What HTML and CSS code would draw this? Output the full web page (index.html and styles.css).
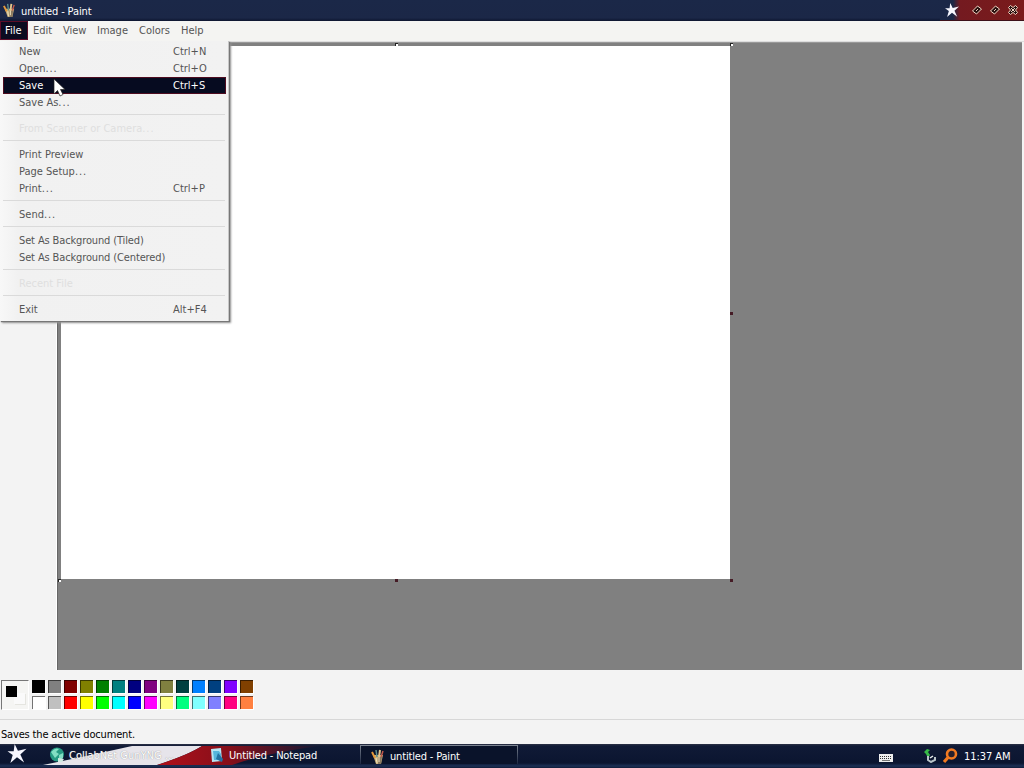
FILE: index.html
```html
<!DOCTYPE html>
<html lang="en">
<head>
    <meta charset="UTF-8">
    <meta name="viewport" content="width=device-width, initial-scale=1.0">
    <title>untitled - Paint</title>
    <link rel="stylesheet" href="styles.css">
</head>
<body>
    <svg width="0" height="0" class="defs">
        <symbol id="paint" viewBox="0 0 16 16">
            <path d="M3 6l10 0-2 9H6z" fill="#c9b27c"/>
            <path d="M8 8h4l-1 7H8z" fill="#8a7a60"/>
            <path d="M5 9L2 3" stroke="#e69a3b" stroke-width="2"/>
            <path d="M7 8L6 1" stroke="#5b8d8b" stroke-width="1.5"/>
            <path d="M9 8l1-7" stroke="#e4c58c" stroke-width="2"/>
            <path d="M11 8l2-6" stroke="#c4584b" stroke-width="1.5"/>
            <path d="M6 9l1 5M9 8v5" stroke="#eee0bd" stroke-width="1"/>
        </symbol>
        <symbol id="star" viewBox="0 0 20 20">
            <path d="M7.5 0l3.500 7 9-2-6.500 6 4 8.500-7.500-5.500L3 20l2.500-8.500L0 7.500l6.500 0z" fill="#f7f7ff"/>
        </symbol>
        <symbol id="diamond" viewBox="0 0 10 10">
            <path d="M.5 6l5-5 4 3-5 5z"/>
            <path d="M4 6l2-2"/>
        </symbol>
    </svg>

    <header class="titlebar">
        <svg class="app-icon"><use href="#paint"/></svg>
        <h1>untitled - Paint</h1>
        <div class="controls">
            <svg class="title-star"><use href="#star"/></svg>
            <svg class="ctl"><use href="#diamond"/></svg>
            <svg class="ctl"><use href="#diamond"/></svg>
            <svg class="ctl" viewBox="0 0 10 10"><path d="M.5 2.5l2-2L5 2.5l2.5-2 2 2L7.5 5l2 2.5-2 2L5 7.5l-2.5 2-2-2L2.5 5zM3 3l4 4M7 3L3 7"/></svg>
        </div>
    </header>

    <nav class="menubar">
        <span class="active t-file">File</span>
        <span class="t-edit">Edit</span>
        <span class="t-view">View</span>
        <span class="t-image">Image</span>
        <span class="t-colors">Colors</span>
        <span class="t-help">Help</span>
        <div class="menu">
            <div class="item"><span>New</span><kbd>Ctrl+N</kbd></div>
            <div class="item"><span>Open<b>...</b></span><kbd>Ctrl+O</kbd></div>
            <div class="item selected"><span>Save</span><kbd>Ctrl+S</kbd></div>
            <div class="item"><span>Save As<b>...</b></span></div>
            <hr>
            <div class="item disabled"><span>From Scanner or Camera<b>...</b></span></div>
            <hr>
            <div class="item"><span>Print Preview</span></div>
            <div class="item"><span>Page Setup<b>...</b></span></div>
            <div class="item"><span>Print<b>...</b></span><kbd>Ctrl+P</kbd></div>
            <hr>
            <div class="item"><span>Send<b>...</b></span></div>
            <hr>
            <div class="item tight"><span>Set As Background (Tiled)</span></div>
            <div class="item tight"><span>Set As Background (Centered)</span></div>
            <hr>
            <div class="item disabled"><span>Recent File</span></div>
            <hr>
            <div class="item"><span>Exit</span><kbd>Alt+F4</kbd></div>
        </div>
    </nav>

    <main class="work">
        <div class="toolbox"></div>
        <div class="area">
            <div class="canvas">
                <i class="handle light nw"></i>
                <i class="handle light n"></i>
                <i class="handle light ne"></i>
                <i class="handle e"></i>
                <i class="handle light sw"></i>
                <i class="handle s"></i>
                <i class="handle se"></i>
            </div>
        </div>
    </main>

    <section class="palette">
        <div class="current"><i class="back"></i><i class="fore"></i></div>
        <div class="swatches" id="swatches"></div>
    </section>

    <footer class="status">Saves the active document.</footer>

    <div class="taskbar">
        <svg class="flag" viewBox="0 0 330 24">
            <defs>
                <linearGradient id="red" x1="0" x2="1">
                    <stop offset="0" stop-color="#b0101a"/>
                    <stop offset=".45" stop-color="#850f1a"/>
                    <stop offset="1" stop-color="#131a35"/>
                </linearGradient>
            </defs>
            <path d="M43 21Q92 11 132 2H202Q188 11 157 21z" fill="#e6e4ea"/>
            <path d="M157 21Q188 11 202 2H320Q270 8 232 21z" fill="url(#red)"/>
        </svg>
        <svg class="start"><use href="#star"/></svg>
        <div class="task collab">
            <svg viewBox="0 0 16 16">
                <circle cx="8" cy="7.5" r="7" fill="#279b83"/>
                <path d="M2 5q4-5 8-3l-3 3 3 2-4 4-2-3zM10 8l4-2v5l-4 3z" fill="#83dfc3"/>
                <path d="M9 11l6 1-2 3H9z" fill="#d1ebe2"/>
            </svg>
            <span>CollabNet GunYNG ...</span>
        </div>
        <div class="task notepad">
            <svg viewBox="0 0 16 16">
                <path d="M2 2l10-1 1 13-10 1z" fill="#b8e4f2"/>
                <path d="M4 4h6l2 3v6H5z" fill="#55b5dc"/>
                <path d="M9 6l5 6-1 3-6-3z" fill="#2371a3"/>
            </svg>
            <span>Untitled - Notepad</span>
        </div>
        <div class="task current-task">
            <svg><use href="#paint"/></svg>
            <span>untitled - Paint</span>
        </div>
        <div class="tray">
            <svg class="keyboard" viewBox="0 0 14 8">
                <path d="M0 0h14v8H0z" fill="#eee"/>
                <path d="M1 2.5h12M1 4.5h12" stroke="#333" stroke-dasharray="1 1"/>
                <path d="M3 6.5h8" stroke="#777"/>
            </svg>
            <svg class="safe" viewBox="0 0 13 14">
                <path d="M0 3l3-3 3 1-2 2 2 3-2 3-2-4z" fill="#37b947"/>
                <path d="M4 7v4l3 2 4-2V8" fill="none" stroke="#b9c4c8" stroke-width="2"/>
                <path d="M6 9l3-2" stroke="#e9eeee" stroke-width="1.5"/>
            </svg>
            <svg class="search" viewBox="0 0 16 16">
                <circle cx="9.5" cy="6" r="4.5" fill="#28202c" stroke="#f27a21" stroke-width="2.6"/>
                <path d="M6 9.5L2 14" stroke="#f27a21" stroke-width="3.2"/>
            </svg>
            <span class="clock">11:37 AM</span>
        </div>
    </div>

    <svg class="pointer" viewBox="0 0 12 19">
        <path d="M1 1v15l3.5-3.5L7 18l3-1.5-2.5-5H12z" fill="#fff" stroke="#222" stroke-width=".7"/>
    </svg>

    <script>
        var colors = [
            '#000000', '#808080', '#800000', '#808000', '#008000', '#008080', '#000080',
            '#800080', '#808040', '#004040', '#0080ff', '#004080', '#8000ff', '#804000',
            '#ffffff', '#c0c0c0', '#ff0000', '#ffff00', '#00ff00', '#00ffff', '#0000ff',
            '#ff00ff', '#ffff80', '#00ff80', '#80ffff', '#8080ff', '#ff0080', '#ff8040'
        ];
        var box = document.getElementById('swatches');
        colors.forEach(function (color) {
            var item = document.createElement('i');
            item.style.backgroundColor = color;
            box.appendChild(item);
        });
    </script>
</body>
</html>
```
FILE: styles.css
```css
* {
    box-sizing: border-box;
}
body {
    margin: 0;
    width: 1024px;
    height: 768px;
    overflow: hidden;
    display: flex;
    flex-direction: column;
    background: #f3f3f3;
    font: 11px/17px "DejaVu Sans Condensed", "DejaVu Sans", sans-serif;
    color: #555;
    white-space: nowrap;
    position: relative;
}
.defs {
    position: absolute;
}
.titlebar {
    height: 21px;
    flex: none;
    display: flex;
    align-items: center;
    padding-left: 2px;
    background: linear-gradient(#1b2848, #1b2747 85%, #0d1630);
    color: #fff;
}
.titlebar h1 {
    margin: 1px 0 0 4px;
    font-size: 11px;
    font-weight: normal;
    letter-spacing: -0.13px;
}
.app-icon {
    width: 15px;
    height: 17px;
}
.controls {
    margin-left: auto;
    width: 84px;
    height: 21px;
    display: flex;
    align-items: center;
    background: linear-gradient(90deg, #1b2747 13px, #741a20 20px, #7a1b1b);
    border-bottom: 1px solid #3c1019;
}
.title-star {
    width: 14px;
    height: 14px;
    margin: 0 13px 0 5px;
}
.ctl {
    width: 10px;
    height: 10px;
    margin-right: 8px;
    fill: #28100f;
    stroke: #f1d5c4;
    stroke-width: 1;
}
.ctl:last-child {
    margin-right: 0;
}
.menubar {
    position: relative;
    height: 20px;
    flex: none;
    display: flex;
    align-items: flex-start;
    background: #f4f4f2;
}
.menubar > span {
    height: 19px;
    line-height: 19px;
    padding-left: 5px;
}
.menubar .active {
    background: #0b0b20;
    border: 1px solid #5d0d29;
    padding-left: 4px;
    line-height: 17px;
    color: #fff;
}
.t-file { width: 28px; }
.t-edit { width: 30px; }
.t-view { width: 34px; }
.t-image { width: 42px; }
.t-colors { width: 42px; }
.menu {
    position: absolute;
    left: 0;
    top: 20px;
    width: 229px;
    height: 280px;
    padding: 2px 2px 2px 3px;
    background: linear-gradient(90deg, #f8f8f8, #f1f1f1 18px, #f2f2f2);
    border-right: 1px solid #c7c7c7;
    box-shadow: 1px 1px 1px #777, 2px 2px 2px #999;
    z-index: 2;
}
.item {
    height: 17px;
    display: flex;
    padding-left: 16px;
}
.item span {
    width: 154px;
}
.item b {
    font-weight: normal;
    letter-spacing: 0.9px;
}
.item kbd {
    font: inherit;
}
.tight {
    letter-spacing: -0.13px;
}
.selected {
    background: #060b20;
    color: #fff;
    box-shadow: inset 0 0 0 1px #4e0c20;
}
.disabled {
    color: #dfdfdf;
}
.menu hr {
    height: 1px;
    margin: 3px 1px 5px 0;
    border: 0;
    background: #dadada;
}
.work {
    height: 629px;
    flex: none;
    display: flex;
    padding-right: 2px;
    border-top: 1px solid #ddd;
}
.toolbox {
    width: 57px;
    border-right: 1px solid #fff;
}
.area {
    flex: 1;
    background: #808080;
    border-left: 1px solid #666;
    border-top: 1px solid #999;
    padding: 3px;
}
.canvas {
    position: relative;
    width: 669px;
    height: 533px;
    background: #fff;
}
.handle {
    position: absolute;
    width: 3px;
    height: 3px;
    background: #451b25;
}
.light {
    background: #fff;
    border: solid #222;
    border-width: 1px 0 0 1px;
}
.nw { left: -3px; top: -3px; }
.n { left: 334px; top: -3px; }
.ne { left: 669px; top: -3px; }
.e { left: 669px; top: 266px; }
.sw { left: -3px; top: 533px; }
.s { left: 334px; top: 533px; }
.se { left: 669px; top: 533px; }
.palette {
    height: 50px;
    flex: none;
    display: flex;
    align-items: flex-start;
    padding: 10px 0 0 1px;
    border-bottom: 1px solid #d7d7d7;
}
.current {
    position: relative;
    width: 28px;
    height: 30px;
    margin-right: 3px;
    border: 1px solid #fff;
    border-left-color: #777;
    border-top-color: #777;
    background: #f5f5f3;
}
.current .fore, .current .back {
    position: absolute;
    width: 11px;
    height: 11px;
}
.current .fore {
    left: 4px;
    top: 5px;
    background: #000;
}
.current .back {
    left: 12px;
    top: 12px;
    background: #fafafa;
    box-shadow: 1px 1px #e5e5e0;
}
.swatches {
    display: grid;
    grid-template-columns: repeat(14, 13px);
    grid-auto-rows: 13px;
    gap: 3px;
}
.swatches i {
    border: solid rgba(0, 0, 0, 0.55);
    border-width: 1px 0 0 1px;
    box-shadow: 1px 1px #fff;
}
.status {
    height: 24px;
    flex: none;
    padding: 6px 0 0 1px;
    color: #000;
    letter-spacing: -0.17px;
}
.taskbar {
    position: relative;
    height: 24px;
    flex: none;
    display: flex;
    background: linear-gradient(#2c3145, #101a36 2px, #0b1530 19px, #1d3156 22px, #101c39);
    color: #fff;
}
.flag {
    position: absolute;
    left: 0;
    top: 0;
    width: 330px;
    height: 24px;
}
.start {
    position: relative;
    width: 20px;
    height: 19px;
    margin: 0 22px 0 7px;
}
.task {
    position: relative;
    height: 22px;
    display: flex;
    align-items: center;
    letter-spacing: -0.17px;
}
.task svg {
    width: 16px;
    height: 16px;
    margin-right: 4px;
}
.collab {
    width: 160px;
    letter-spacing: 0;
}
.collab span {
    text-shadow: 0 0 1px #777;
}
.notepad {
    width: 151px;
}
.current-task {
    width: 158px;
    height: 19px;
    margin-top: 1px;
    padding: 3px 0 0 9px;
    border: solid #5b6473;
    border-width: 1px 1px 0;
    border-image: linear-gradient(#7d8591, #17223d) 1;
    background: #0a132a;
}
.tray {
    margin-left: auto;
    display: flex;
    align-items: center;
    padding-right: 13px;
}
.keyboard {
    width: 14px;
    height: 8px;
    margin: 4px 31px 0 0;
}
.safe {
    width: 13px;
    height: 14px;
    margin-right: 5px;
}
.search {
    width: 16px;
    height: 16px;
    margin-right: 6px;
}
.clock {
    width: 47px;
    letter-spacing: -0.05px;
}
.pointer {
    position: absolute;
    left: 53px;
    top: 78px;
    width: 12px;
    height: 19px;
    z-index: 3;
}
```
